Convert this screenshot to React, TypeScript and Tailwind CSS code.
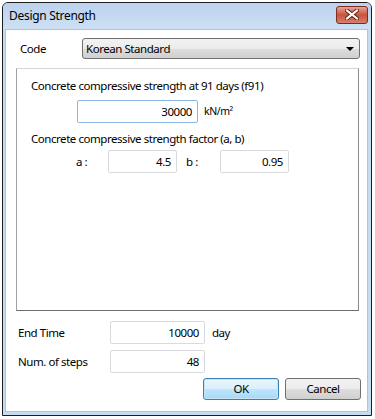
import React from "react";

const font = { fontFamily: '"Noto Sans", "Liberation Sans", sans-serif' };

function Field({ value, className = "" }: { value: string; className?: string }) {
  return (
    <div
      className={`h-[23px] border border-[#d9dadf] rounded-[2px] bg-white flex items-center justify-end pr-[5px] text-[11.5px] text-black ${className}`}
    >
      {value}
    </div>
  );
}

export default function App() {
  return (
    <div className="w-[375px] h-[419px] bg-white pt-[2px] pl-[2px] tracking-[-0.45px]" style={font}>
      <div className="w-[370px] h-[414px] border border-[#1e1e1e] rounded-t-[6px] bg-[#c7dbf1] flex flex-col overflow-hidden">
        {/* Title bar */}
        <div className="h-[26px] shrink-0 flex items-center justify-between pl-[6px] pr-[3px] bg-gradient-to-b from-[#bcd3ed] to-[#cde0f4]">
          <span className="text-[12px] tracking-[-0.3px] text-black leading-none mt-[-1px]">Design Strength</span>
          <div className="w-[32px] h-[18px] mt-[-3px] rounded-[3px] border border-[#7e2b1f] bg-gradient-to-b from-[#e3a598] via-[#c9523b] to-[#d5806d] flex items-center justify-center">
            <svg width="14" height="11" viewBox="0 0 14 11">
              <path d="M2 1.5 L12 9.5 M12 1.5 L2 9.5" stroke="#5a1a10" strokeWidth="4" strokeLinecap="square" />
              <path d="M2 1.5 L12 9.5 M12 1.5 L2 9.5" stroke="#ffffff" strokeWidth="2.2" strokeLinecap="square" />
            </svg>
          </div>
        </div>
        {/* Client */}
        <div className="flex-1 ml-[2px] mr-[3px] mb-[3px] bg-white border border-[#a9c5e3] flex flex-col">
          {/* Code row */}
          <div className="mt-[8px] flex items-center">
            <span className="w-[76px] pl-[14px] text-[11.5px] text-black">Code</span>
            <div className="w-[278px] h-[21px] rounded-[3px] border border-[#707070] bg-[linear-gradient(to_bottom,#f3f3f3_0%,#ebebeb_50%,#dddddd_50%,#d0d0d0_100%)] flex items-center justify-between pl-[3px] pr-[5px]">
              <span className="text-[11.5px] text-black">Korean Standard</span>
              <svg width="8" height="4" viewBox="0 0 8 4">
                <path d="M0 0 H8 L4 4 Z" fill="#000" />
              </svg>
            </div>
          </div>
          {/* Group box */}
          <div className="mt-[9px] ml-[10px] w-[343px] h-[243px] border-t border-l border-t-[#d5d5d5] border-l-[#a0a0a0] border-r border-b border-r-[#8a8a8a] border-b-[#6e6e6e] flex flex-col">
            <div className="mt-[9px] pl-[14px] text-[11.5px] text-black leading-[16px]">
              Concrete compressive strength at 91 days (f91)
            </div>
            <div className="mt-[6px] flex items-center">
              <div className="ml-[60px] w-[121px] h-[23px] border border-[#8cb6e2] rounded-[2px] bg-white flex items-center justify-end pr-[5px] text-[11.5px] text-black">
                30000
              </div>
              <span className="ml-[6px] text-[10.5px] text-black">kN/m²</span>
            </div>
            <div className="mt-[8px] pl-[14px] text-[11.5px] text-black leading-[16px]">
              Concrete compressive strength factor (a, b)
            </div>
            <div className="mt-[3px] flex items-center">
              <span className="ml-[59px] w-[32px] text-[11.5px] text-black">a :</span>
              <Field value="4.5" className="w-[69px]" />
              <span className="ml-[9px] w-[34px] text-[11.5px] text-black">b :</span>
              <Field value="0.95" className="w-[69px]" />
            </div>
          </div>
          {/* End time */}
          <div className="mt-[10px] flex items-center">
            <span className="w-[104px] pl-[12px] text-[11.5px] text-black">End Time</span>
            <Field value="10000" className="w-[95px] h-[22px]" />
            <span className="ml-[7px] text-[11.5px] text-black">day</span>
          </div>
          <div className="mt-[6px] flex items-center">
            <span className="w-[104px] pl-[12px] text-[11.5px] text-black">Num. of steps</span>
            <Field value="48" className="w-[95px] h-[22px]" />
          </div>
          <div className="mt-[5px] flex justify-end gap-[6px] pr-[6px]">
            <div className="w-[76px] h-[22px] rounded-[3px] border border-[#3c7fb1] bg-[linear-gradient(to_bottom,#eaf6fd_0%,#d9f0fc_50%,#bee6fd_50%,#a7d9f5_100%)] flex items-center justify-center text-[11.5px] text-black shadow-[inset_0_0_0_1px_#c6e6f8]">
              OK
            </div>
            <div className="w-[76px] h-[22px] rounded-[3px] border border-[#707070] bg-[linear-gradient(to_bottom,#f2f2f2_0%,#ebebeb_50%,#dddddd_50%,#cfcfcf_100%)] flex items-center justify-center text-[11.5px] text-black">
              Cancel
            </div>
          </div>
        </div>
      </div>
    </div>
  );
}
